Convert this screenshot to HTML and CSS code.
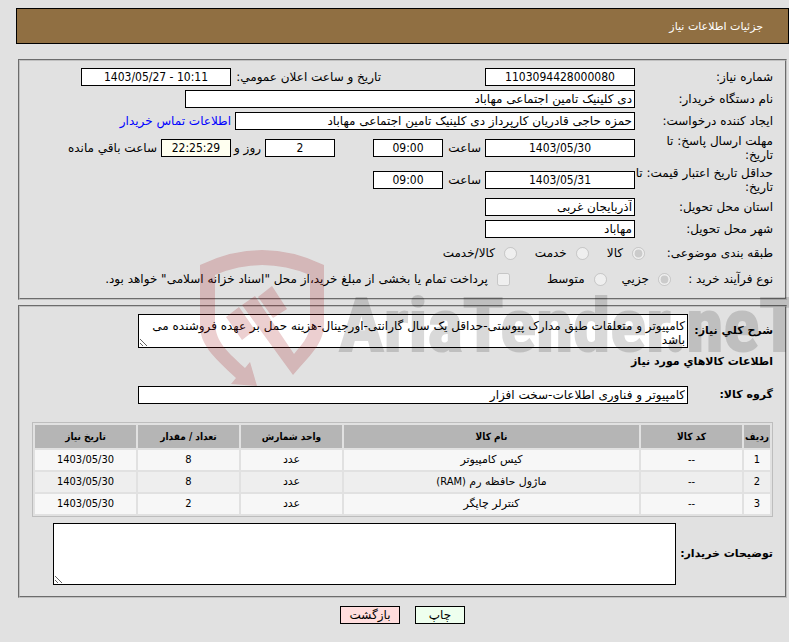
FILE: index.html
```
<!DOCTYPE html>
<html lang="fa" dir="rtl">
<head>
    <meta charset="UTF-8">
    <meta name="viewport" content="width=device-width, initial-scale=1.0">
    <title>جزئیات اطلاعات نیاز</title>
    <link rel="stylesheet" href="styles.css">
</head>
<body>
    <div class="title-bar">جزئیات اطلاعات نیاز</div>

    <form id="needForm">
        <fieldset class="panel info">
            <div class="row">
                <label class="caption" for="needNo">شماره نیاز:</label>
                <input type="text" class="box medium center" id="needNo" value="1103094428000080" readonly>
                <label class="second-caption" for="announceDate">تاریخ و ساعت اعلان عمومي:</label>
                <input type="text" class="box medium center" id="announceDate" value="1403/05/27 - 10:11" dir="ltr" readonly>
            </div>
            <div class="row">
                <label class="caption" for="buyer">نام دستگاه خریدار:</label>
                <input type="text" class="box wide" id="buyer" value="دی کلینیک تامین اجتماعی مهاباد" readonly>
            </div>
            <div class="row">
                <label class="caption" for="creator">ایجاد کننده درخواست:</label>
                <input type="text" class="box creator" id="creator" value="حمزه حاجی قادریان کارپرداز دی کلینیک تامین اجتماعی مهاباد" readonly>
                <a class="contact" href="#">اطلاعات تماس خریدار</a>
            </div>
            <div class="row tall">
                <label class="caption" for="replyDate">مهلت ارسال پاسخ: تا<br>تاریخ:</label>
                <input type="text" class="box medium center" id="replyDate" value="1403/05/30" readonly>
                <label class="hour" for="replyHour">ساعت</label>
                <input type="text" class="box small center" id="replyHour" value="09:00" readonly>
                <input type="text" class="box small center days" id="daysLeft" value="2" readonly>
                <label class="day" for="daysLeft">روز و</label>
                <input type="text" class="box small center timer" id="timeLeft" value="22:25:29" readonly>
                <label for="timeLeft">ساعت باقي مانده</label>
            </div>
            <div class="row tall">
                <label class="caption" for="priceDate">حداقل تاریخ اعتبار قیمت: تا<br>تاریخ:</label>
                <input type="text" class="box medium center" id="priceDate" value="1403/05/31" readonly>
                <label class="hour" for="priceHour">ساعت</label>
                <input type="text" class="box small center" id="priceHour" value="09:00" readonly>
            </div>
            <div class="row">
                <label class="caption" for="province">استان محل تحویل:</label>
                <input type="text" class="box medium" id="province" value="آذربایجان غربی" readonly>
            </div>
            <div class="row">
                <label class="caption" for="city">شهر محل تحویل:</label>
                <input type="text" class="box medium" id="city" value="مهاباد" readonly>
            </div>
            <div class="row choices subject">
                <span class="choice-caption">طبقه بندی موضوعی:</span>
                <label><input type="radio" name="subject" checked disabled>کالا</label>
                <label><input type="radio" name="subject" disabled>خدمت</label>
                <label><input type="radio" name="subject" disabled>کالا/خدمت</label>
            </div>
            <div class="row choices process">
                <span class="choice-caption">نوع فرآیند خرید :</span>
                <label><input type="radio" name="process" checked disabled>جزیي</label>
                <label><input type="radio" name="process" disabled>متوسط</label>
                <label class="treasury"><input type="checkbox" name="treasury" disabled>پرداخت تمام یا بخشی از مبلغ خرید،از محل "اسناد خزانه اسلامی" خواهد بود.</label>
            </div>
        </fieldset>

        <fieldset class="panel goods">
            <div class="row">
                <label class="bold side" for="description">شرح کلي نیاز:</label>
                <textarea class="box description" id="description" readonly>کامپیوتر و متعلقات طبق مدارک پیوستی-حداقل یک سال گارانتی-اورجینال-هزینه حمل بر عهده فروشنده می باشد</textarea>
            </div>
            <h2>اطلاعات کالاهاي مورد نیاز</h2>
            <div class="row group">
                <label class="bold side" for="goodsGroup">گروه کالا:</label>
                <input type="text" class="box" id="goodsGroup" value="کامپیوتر و فناوری اطلاعات-سخت افزار" readonly>
            </div>
            <table class="items">
                <tr>
                    <th class="col-row">ردیف</th>
                    <th class="col-unit">کد کالا</th>
                    <th>نام کالا</th>
                    <th class="col-unit">واحد شمارش</th>
                    <th class="col-unit">تعداد / مقدار</th>
                    <th class="col-unit">تاریخ نیاز</th>
                </tr>
                <tr>
                    <td class="num">1</td>
                    <td class="num">--</td>
                    <td>کیس کامپیوتر</td>
                    <td>عدد</td>
                    <td class="num">8</td>
                    <td class="num">1403/05/30</td>
                </tr>
                <tr class="alt">
                    <td class="num">2</td>
                    <td class="num">--</td>
                    <td>ماژول حافظه رم <span class="num">(RAM)</span></td>
                    <td>عدد</td>
                    <td class="num">8</td>
                    <td class="num">1403/05/30</td>
                </tr>
                <tr>
                    <td class="num">3</td>
                    <td class="num">--</td>
                    <td>کنترلر چاپگر</td>
                    <td>عدد</td>
                    <td class="num">2</td>
                    <td class="num">1403/05/30</td>
                </tr>
            </table>
            <div class="row">
                <label class="bold" for="notes">توضیحات خریدار:</label>
                <textarea class="box notes" id="notes" readonly></textarea>
            </div>
        </fieldset>

        <div class="buttons">
            <button type="button" class="box print">چاپ</button>
            <button type="button" class="box back">بازگشت</button>
        </div>
    </form>

    <!-- watermark -->
    <svg class="watermark" viewBox="0 0 589 150" direction="ltr" aria-hidden="true">
        <g class="shield">
            <path d="M0 15Q62-15 124 15V72C124 92 115 100 93 125L42 55L55 46L94 104C106 90 110 84 110 72V25Q62 5 15 25V70C15 90 23 98 45 118L50 112L57 136L31 134L36 128C12 106 0 94 0 75Z"/>
            <path d="M26 67L39 57L55 80L42 90Z"/>
            <path d="M58 47L72 36L87 59L73 68Z"/>
        </g>
        <text class="brand" x="139" y="101">AriaTender.neT</text>
    </svg>
</body>
</html>
```
FILE: styles.css
```
* {
    box-sizing: border-box;
}

body {
    position: relative;
    margin: 8px 0 0 16px;
    background-color: #e1e1e1;
    color: #000;
    font: 12px/14px "DejaVu Sans", sans-serif;
}

.title-bar {
    height: 36px;
    padding: 0 25px;
    border: 1px solid #000;
    background-color: #906f42;
    color: #fff;
    font-size: 11px;
    line-height: 36px;
}

form {
    padding: 15px 2px 0;
}

.panel {
    min-width: 0;
    margin: 0 0 5px;
    padding: 7px 12px 4px;
    border: 2px groove #c0c0c0;
}

.goods {
    padding-bottom: 7px;
}

.row {
    display: flex;
    align-items: center;
    gap: 4px;
    min-height: 18px;
    margin-bottom: 4px;
    white-space: nowrap;
}

.tall {
    height: 28px;
}

.caption {
    width: 134px;
    flex-shrink: 0;
}

.second-caption {
    width: 146px;
    margin-right: 100px;
}

.box {
    height: 18px;
    margin: 0;
    padding: 1px 2px;
    border: 1px solid #000;
    border-radius: 0;
    background-color: #fff;
    color: #000;
    font: inherit;
}

.medium {
    width: 150px;
}

.small {
    width: 70px;
}

.wide {
    width: 450px;
}

.creator {
    width: 400px;
}

.center {
    text-align: center;
    font-family: "DejaVu Sans Condensed", "DejaVu Sans", sans-serif;
}

.contact {
    color: #00f;
    text-decoration: none;
}

.hour {
    width: 34px;
}

.days {
    margin-right: 34px;
}

.day {
    width: 26px;
}

.timer {
    background-color: #fffff0;
}

.choices {
    height: 22px;
    gap: 18px;
}

.choices label {
    display: flex;
    align-items: center;
    gap: 9px;
}

.choices input {
    width: 13px;
    height: 13px;
    margin: 0;
}

.choice-caption {
    width: 110px;
}

.process {
    gap: 15px;
}

.process .choice-caption {
    width: 87px;
}

.process .treasury {
    margin-right: 22px;
}

.bold, h2 {
    margin: 0;
    font-size: 11px;
    font-weight: bold;
}

h2 {
    margin: 7px 0 17px;
}

.side {
    width: 81px;
}

textarea.box {
    padding-top: 4px;
    resize: both;
    white-space: pre-wrap;
}

.description {
    width: 550px;
    height: 34px;
}

.group .box {
    width: 550px;
}

.items {
    width: 100%;
    margin: 18px 0 6px;
    border: 1px solid #bdbdbd;
    border-spacing: 2px;
    table-layout: fixed;
    text-align: center;
    font-size: 11px;
}

.items th {
    height: 23px;
    padding: 0;
    background-color: #b5b5b5;
    font-family: "DejaVu Sans Condensed", "DejaVu Sans", sans-serif;
    font-size: 10px;
}

.items td {
    height: 20px;
    padding: 0;
    background-color: #f7f7f7;
}

.items .alt td {
    background-color: #eee;
}

.num {
    font-family: "DejaVu Sans Condensed", "DejaVu Sans", sans-serif;
}

.col-row {
    width: 26px;
}

.col-unit {
    width: 101px;
}

.notes {
    width: 623px;
    height: 62px;
}

.buttons {
    display: flex;
    justify-content: center;
    gap: 15px;
    padding-top: 3px;
}

.print {
    width: 50px;
    background-color: #efe;
}

.back {
    width: 60px;
    background-color: #fdd;
}

.watermark {
    position: absolute;
    left: 184px;
    top: 242px;
    width: 589px;
    height: 150px;
    pointer-events: none;
}

.shield {
    fill: #a00f14;
    opacity: 0.2;
}

.brand {
    fill: #000;
    stroke: #000;
    stroke-width: 2;
    opacity: 0.15;
    font: bold 75px "Liberation Sans Narrow", "Roboto Condensed", Roboto, sans-serif;
}
```
